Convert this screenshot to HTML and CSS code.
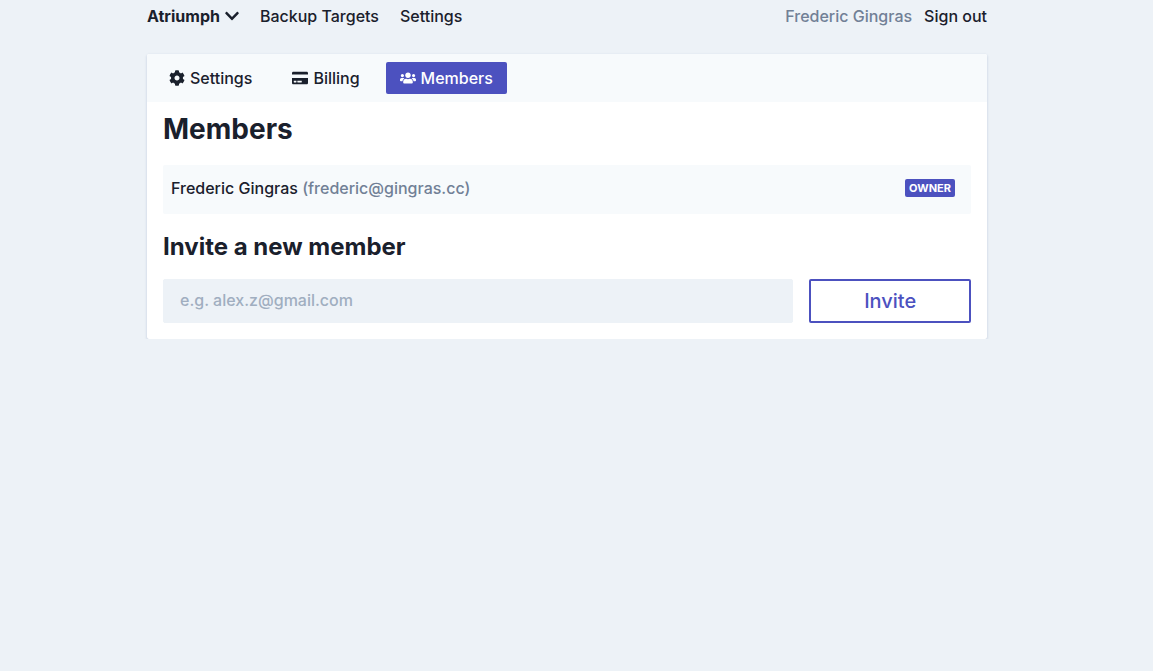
FILE: index.html
```html
<!DOCTYPE html>
<html lang="en">
<head>
<meta charset="utf-8">
<meta name="viewport" content="width=device-width, initial-scale=1">
<title>Members</title>
<link rel="stylesheet" href="styles.css">
</head>
<body>
<div class="page">
  <header class="topbar">
    <nav class="nav" aria-label="Main">
      <button type="button" class="team">Atriumph
        <svg class="chevron" viewBox="0 0 448 512" aria-hidden="true"><path d="M207.029 381.476L12.686 187.132c-9.373-9.373-9.373-24.569 0-33.941l22.667-22.667c9.357-9.357 24.522-9.375 33.901-.04L224 284.505l154.745-154.021c9.379-9.335 24.544-9.317 33.901.04l22.667 22.667c9.373 9.373 9.373 24.569 0 33.941L240.971 381.476c-9.373 9.372-24.569 9.372-33.942 0z"/></svg>
      </button>
      <a href="#targets">Backup Targets</a>
      <a href="#settings">Settings</a>
    </nav>
    <div class="account">
      <span class="muted">Frederic Gingras</span>
      <a href="#signout">Sign out</a>
    </div>
  </header>
  <main class="card">
    <nav class="tabs" aria-label="Team">
      <a class="tab" href="#team-settings">
        <svg class="icon" viewBox="0 0 512 512" aria-hidden="true"><path d="M487.400 315.700l-42.600-24.600c4.300-23.200 4.300-47 0-70.200l42.600-24.600c4.900-2.800 7.100-8.600 5.500-14-11.100-35.600-30-67.800-54.700-94.600-3.800-4.100-10-5.100-14.800-2.300L380.800 110c-17.900-15.400-38.500-27.300-60.800-35.100V25.800c0-5.600-3.900-10.500-9.400-11.700-36.700-8.200-74.300-7.800-109.200 0-5.500 1.200-9.400 6.100-9.400 11.700V75c-22.200 7.900-42.800 19.800-60.800 35.100L88.700 85.500c-4.900-2.800-11-1.900-14.800 2.300-24.700 26.700-43.600 58.900-54.700 94.600-1.700 5.400.6 11.200 5.500 14L67.300 221c-4.300 23.200-4.300 47 0 70.200l-42.600 24.600c-4.900 2.800-7.100 8.600-5.500 14 11.100 35.600 30 67.800 54.700 94.600 3.800 4.100 10 5.100 14.800 2.300l42.600-24.600c17.900 15.400 38.500 27.300 60.800 35.100v49.200c0 5.600 3.900 10.500 9.400 11.700 36.700 8.200 74.300 7.800 109.200 0 5.500-1.200 9.400-6.100 9.400-11.700v-49.200c22.200-7.900 42.800-19.800 60.800-35.100l42.600 24.600c4.900 2.800 11 1.900 14.800-2.300 24.700-26.700 43.600-58.900 54.700-94.600 1.500-5.500-.7-11.300-5.600-14.100zM256 336c-44.100 0-80-35.900-80-80s35.900-80 80-80 80 35.900 80 80-35.900 80-80 80z"/></svg>
        Settings
      </a>
      <a class="tab" href="#billing">
        <svg class="icon" viewBox="0 0 576 512" aria-hidden="true"><path d="M0 432c0 26.500 21.500 48 48 48h480c26.500 0 48-21.500 48-48V256H0v176zm192-68c0-6.600 5.400-12 12-12h136c6.600 0 12 5.400 12 12v40c0 6.600-5.400 12-12 12H204c-6.600 0-12-5.400-12-12v-40zm-128 0c0-6.600 5.400-12 12-12h72c6.600 0 12 5.400 12 12v40c0 6.600-5.400 12-12 12H76c-6.600 0-12-5.400-12-12v-40zM576 80v48H0V80c0-26.500 21.500-48 48-48h480c26.500 0 48 21.500 48 48z"/></svg>
        Billing
      </a>
      <a class="tab tab-active" href="#members" aria-current="page">
        <svg class="icon" viewBox="0 0 640 512" aria-hidden="true"><path d="M96 224c35.300 0 64-28.700 64-64s-28.700-64-64-64-64 28.700-64 64 28.700 64 64 64zm448 0c35.300 0 64-28.700 64-64s-28.700-64-64-64-64 28.700-64 64 28.700 64 64 64zm32 32h-64c-17.600 0-33.500 7.100-45.100 18.600 40.300 22.100 68.900 62 75.100 109.400h66c17.700 0 32-14.300 32-32v-32c0-35.300-28.700-64-64-64zm-256 0c61.900 0 112-50.100 112-112S381.900 32 320 32 208 82.100 208 144s50.100 112 112 112zm76.800 32h-8.300c-20.800 10-43.900 16-68.500 16s-47.600-6-68.500-16h-8.300C179.600 288 128 339.600 128 403.200V432c0 26.500 21.500 48 48 48h288c26.500 0 48-21.500 48-48v-28.800c0-63.600-51.600-115.200-115.200-115.200zm-223.700-13.400C161.500 263.100 145.600 256 128 256H64c-35.300 0-64 28.700-64 64v32c0 17.700 14.300 32 32 32h65.900c6.300-47.400 34.900-87.300 75.200-109.400z"/></svg>
        Members
      </a>
    </nav>
    <div class="content">
      <h1 class="title">Members</h1>
      <ul class="members">
        <li class="member">
          <span>Frederic Gingras <span class="muted">(frederic@gingras.cc)</span></span>
          <span class="badge">OWNER</span>
        </li>
      </ul>
      <h2 class="subtitle"><label for="email">Invite a new member</label></h2>
      <form class="invite">
        <input class="field" id="email" type="email" placeholder="e.g. alex.z@gmail.com">
        <button class="submit" type="button">Invite</button>
      </form>
    </div>
  </main>
</div>
</body>
</html>
```
FILE: styles.css
```css
* {
  box-sizing: border-box;
}

body {
  margin: 0;
  padding-right: 19px;
  background: #edf2f7;
  color: #1a202c;
  font: 500 16px/24px Inter, sans-serif;
}

a {
  color: inherit;
  text-decoration: none;
}

button,
input {
  font: inherit;
  color: inherit;
}

.page {
  max-width: 840px;
  margin: 0 auto;
}

.topbar {
  display: flex;
  flex-wrap: wrap;
  justify-content: space-between;
  padding: 4px 0 26px;
}

.nav {
  display: flex;
  gap: 21px;
}

.account {
  display: flex;
  gap: 12px;
}

.team {
  display: flex;
  align-items: center;
  gap: 5px;
  padding: 0;
  border: 0;
  background: none;
  font-weight: 700;
}

.chevron {
  width: 14px;
  height: 16px;
  fill: currentColor;
}

.muted {
  color: #718096;
}

.card {
  border-radius: 2px;
  background: #fff;
  box-shadow: 0 1px 3px rgba(45, 80, 140, 0.16), 0 1px 2px rgba(45, 80, 140, 0.1);
}

.tabs {
  display: flex;
  flex-wrap: wrap;
  gap: 12px;
  padding: 8px;
  border-radius: 2px 2px 0 0;
  background: #f7fafc;
}

.tab {
  display: flex;
  align-items: center;
  gap: 5px;
  padding: 4px 14px;
  border-radius: 2px;
}

.tab-active {
  background: #4c51bf;
  color: #fff;
}

.icon {
  width: 16px;
  height: 16px;
  fill: currentColor;
}

.content {
  padding: 8px 16px 16px;
}

.title {
  margin: 0 0 16px;
  font-size: 28px;
  line-height: 39px;
}

.members {
  margin: 0 0 16px;
  padding: 0;
  list-style: none;
}

.member {
  display: flex;
  align-items: center;
  justify-content: space-between;
  min-height: 49px;
  padding: 8px 16px 11px 8px;
  border-radius: 2px;
  background: #f7fafc;
}

.badge {
  padding: 0 4px;
  border-radius: 2px;
  background: #4c51bf;
  color: #fff;
  font-size: 11px;
  line-height: 18px;
  font-weight: 700;
}

.subtitle {
  margin: 0 0 16px;
  font-size: 24px;
  line-height: 33px;
}

.invite {
  display: flex;
  gap: 16px;
}

.field {
  flex: 1;
  min-width: 0;
  height: 44px;
  padding: 0 16px 2px;
  border: 1px solid #edf2f7;
  border-radius: 2px;
  background: #edf2f7;
}

.field::placeholder {
  color: #a0aec0;
  opacity: 1;
}

.submit {
  width: 20%;
  border: 2px solid #4c51bf;
  border-radius: 2px;
  background: #fff;
  color: #4c51bf;
  font-size: 20px;
}
```
